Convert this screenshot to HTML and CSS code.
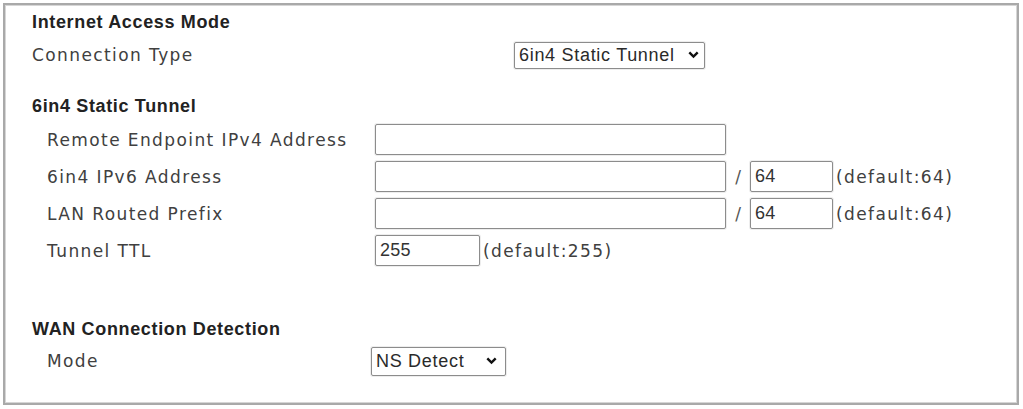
FILE: index.html
```html
<!DOCTYPE html>
<html lang="en">
<head>
<meta charset="utf-8">
<title>Internet Access Mode</title>
<link rel="stylesheet" href="styles.css">
</head>
<body>
<div class="panel">
  <section class="sec sec-mode">
    <h3 class="head">Internet Access Mode</h3>
    <div class="row row-conn">
      <span class="label label-conn">Connection Type</span>
      <span class="select-wrap sel-conn">
        <select class="select"><option>6in4 Static Tunnel</option></select>
        <svg class="chev" viewBox="0 0 10 7" width="11" height="8"><path d="M1.2 1.2 L5 5 L8.8 1.2" fill="none" stroke="#111" stroke-width="2.2"/></svg>
      </span>
    </div>
  </section>

  <section class="sec sec-tunnel">
    <h3 class="head">6in4 Static Tunnel</h3>
    <div class="rows">
      <div class="row row-field">
        <span class="label label-tun">Remote Endpoint IPv4 Address</span>
        <input class="input input-wide" type="text" value="">
      </div>
      <div class="row row-field">
        <span class="label label-tun">6in4 IPv6 Address</span>
        <input class="input input-wide" type="text" value="">
        <span class="slash">/</span>
        <input class="input input-prefix" type="text" value="64">
        <span class="hint">(default:64)</span>
      </div>
      <div class="row row-field">
        <span class="label label-tun">LAN Routed Prefix</span>
        <input class="input input-wide" type="text" value="">
        <span class="slash">/</span>
        <input class="input input-prefix" type="text" value="64">
        <span class="hint">(default:64)</span>
      </div>
      <div class="row row-field">
        <span class="label label-tun">Tunnel TTL</span>
        <input class="input input-ttl" type="text" value="255">
        <span class="hint">(default:255)</span>
      </div>
    </div>
  </section>

  <section class="sec sec-wan">
    <h3 class="head">WAN Connection Detection</h3>
    <div class="row row-mode">
      <span class="label label-mode">Mode</span>
      <span class="select-wrap sel-ns">
        <select class="select"><option>NS Detect</option></select>
        <svg class="chev" viewBox="0 0 10 7" width="11" height="8"><path d="M1.2 1.2 L5 5 L8.8 1.2" fill="none" stroke="#111" stroke-width="2.2"/></svg>
      </span>
    </div>
  </section>
</div>
</body>
</html>
```

FILE: styles.css
```css
html, body {
  margin: 0;
  padding: 0;
  background: #ffffff;
}

.panel {
  box-sizing: border-box;
  margin: 3px 4px 0 3px;
  height: 402px;
  border: 2px solid #a9a9a9;
  box-shadow: inset 0 0 0 1px #d6d6d6;
  padding: 7px 0 0 27px;
  font-family: "DejaVu Sans", Verdana, sans-serif;
  color: #404040;
}

.head {
  margin: 0;
  height: 20px;
  line-height: 20px;
  font-family: "Liberation Sans", Arial, sans-serif;
  font-weight: bold;
  font-size: 18px;
  color: #222;
  letter-spacing: 0.65px;
}

.row {
  display: flex;
  align-items: center;
}

.label {
  font-size: 17px;
  letter-spacing: 1.4px;
  white-space: nowrap;
  flex: none;
}

.row-conn {
  height: 30px;
  margin-top: 8px;
}
.label-conn { width: 482px; }

.sec-tunnel { margin-top: 26px; }
.rows {
  display: flex;
  flex-direction: column;
  gap: 6px;
  margin-top: 8px;
  padding-left: 15px;
}
.row-field { height: 31px; }
.label-tun { width: 328px; }

.sec-wan { margin-top: 53px; }
.row-mode {
  height: 30px;
  margin-top: 7px;
  padding-left: 15px;
}
.label-mode { width: 324px; }

.input {
  box-sizing: border-box;
  height: 31px;
  margin: 0;
  border: 1px solid #8c8c8c;
  border-radius: 2px;
  box-shadow: 0 0 0 1px rgba(0, 0, 0, 0.07);
  padding: 0 4px;
  font-family: "Liberation Sans", Arial, sans-serif;
  font-size: 18px;
  letter-spacing: 0.3px;
  color: #333;
  background: #fff;
  flex: none;
}
.input-wide { width: 351px; }
.input-prefix { width: 83px; }
.input-ttl { width: 105px; }

.slash {
  width: 24px;
  text-align: center;
  font-size: 17px;
  color: #555;
  flex: none;
}

.hint {
  margin-left: 3px;
  font-size: 17px;
  letter-spacing: 1.4px;
  white-space: nowrap;
}

.select-wrap {
  position: relative;
  display: inline-block;
  flex: none;
}
.select {
  -webkit-appearance: none;
  appearance: none;
  box-sizing: border-box;
  margin: 0;
  border: 1px solid #8c8c8c;
  border-radius: 2px;
  box-shadow: 0 0 0 1px rgba(0, 0, 0, 0.07);
  background: #fff;
  font-family: "Liberation Sans", Arial, sans-serif;
  font-size: 18px;
  letter-spacing: 0.7px;
  color: #2a2a2a;
  padding: 0 0 0 4px;
}
.sel-conn .select { width: 191px; height: 27px; }
.sel-ns .select { width: 135px; height: 29px; }

.chev {
  position: absolute;
  top: 50%;
  right: 6px;
  margin-top: -4px;
  pointer-events: none;
}
.sel-ns .chev { right: 9px; }
```
